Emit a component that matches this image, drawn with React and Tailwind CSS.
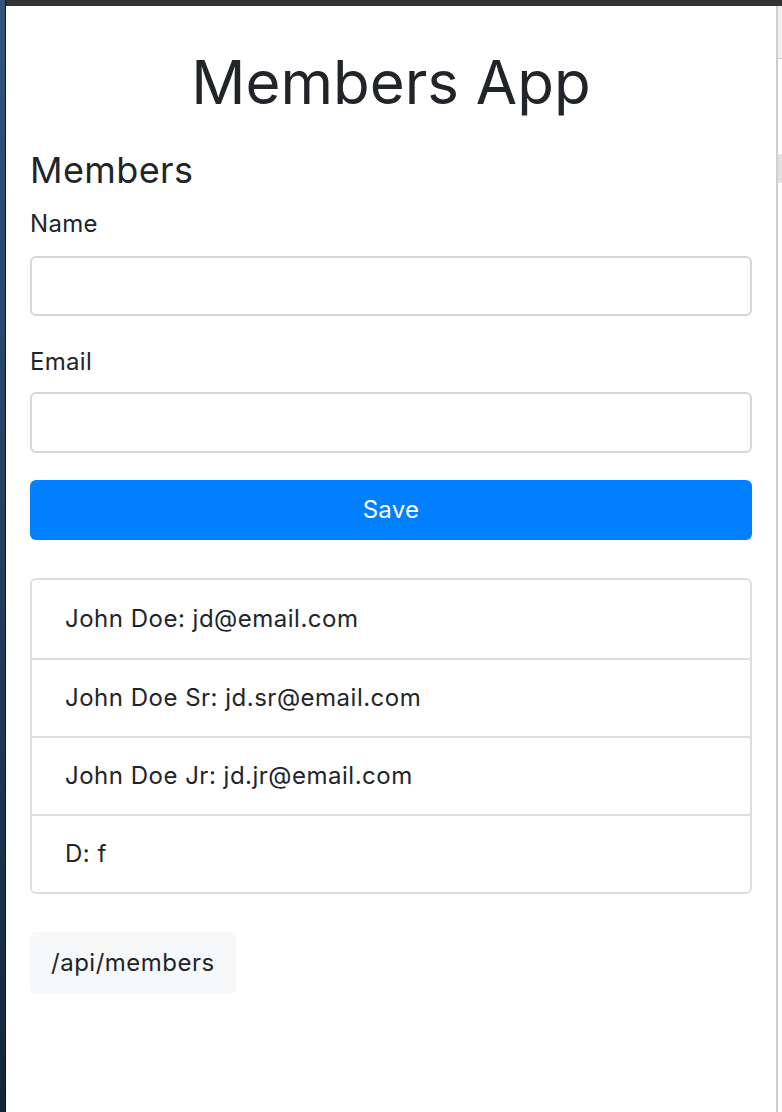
import React, { useState } from "react";

const members = [
  { name: "John Doe", email: "jd@email.com" },
  { name: "John Doe Sr", email: "jd.sr@email.com" },
  { name: "John Doe Jr", email: "jd.jr@email.com" },
  { name: "D", email: "f" },
];

const App = () => {
  const [form, setform] = useState({ name: "", email: "" });

  const handleChange = (e) =>
    setform({ ...form, [e.target.name]: e.target.value });

  return (
    <div
      className="flex w-[782px] h-[1112px] overflow-hidden bg-white text-[#212529]"
      style={{ fontFamily: "Inter, 'Noto Sans', sans-serif" }}
    >
      {/* desktop edge */}
      <div className="w-[5px] bg-gradient-to-b from-[#34547a] via-[#263f5e] to-[#14253a]" />
      <div className="w-px bg-[#151515]" />

      <div className="flex flex-1 flex-col">
        <div className="h-[6px] bg-[#333333]" />
        <div className="flex flex-1">
          <div className="flex-1 px-6">
            <h1 className="mt-[40px] text-center text-[60px] leading-[72px] font-normal">
              Members App
            </h1>

            <h2 className="mt-[30px] text-[36px] leading-[44px] font-normal tracking-[0.4px]">
              Members
            </h2>

            <form className="mt-[16px]" onSubmit={(e) => e.preventDefault()}>
              <label className="block text-[24px] leading-[32px] tracking-[0.3px]">Name</label>
              <input
                className="mt-[16px] block w-full h-[60px] rounded-[6px] border-2 border-[#d3d6da] px-4 text-[24px] focus:outline-none"
                name="name"
                value={form.name}
                onChange={handleChange}
              />

              <label className="mt-[30px] block text-[24px] leading-[32px] tracking-[0.3px]">
                Email
              </label>
              <input
                className="mt-[14px] block w-full h-[61px] rounded-[6px] border-2 border-[#d3d6da] px-4 text-[24px] focus:outline-none"
                name="email"
                value={form.email}
                onChange={handleChange}
              />

              <button
                className="mt-[27px] block w-full h-[60px] rounded-[6px] bg-[#0080ff] text-[24px] tracking-[0.3px] text-white"
                type="submit"
              >
                Save
              </button>
            </form>

            <ul className="mt-[38px] rounded-[6px] border-2 border-[#dedede]">
              {members.map((m, i) => (
                <li
                  key={i}
                  className={`h-[78px] flex items-center pl-[33px] text-[24px] tracking-[0.5px] ${
                    i > 0 ? "border-t-2 border-[#dedede]" : ""
                  }`}
                >
                  {m.name}: {m.email}
                </li>
              ))}
            </ul>

            <div className="mt-[38px] flex w-[206px] h-[62px] items-center rounded-[6px] bg-[#f7f8fa] pl-[21px] text-[24px] tracking-[0.5px]">
              /api/members
            </div>
          </div>

          {/* scrollbar edge */}
          <div className="w-[2px] bg-[#cfcfcf]" />
          <div className="flex w-[4px] flex-col">
            <div className="h-[52px] bg-[#f0f0f0]" />
            <div className="h-px bg-[#cccccc]" />
            <div className="h-[95px] bg-white" />
            <div className="h-[29px] bg-[#e2e2e2]" />
            <div className="flex-1 bg-white" />
          </div>
        </div>
      </div>
    </div>
  );
};

export default App;
